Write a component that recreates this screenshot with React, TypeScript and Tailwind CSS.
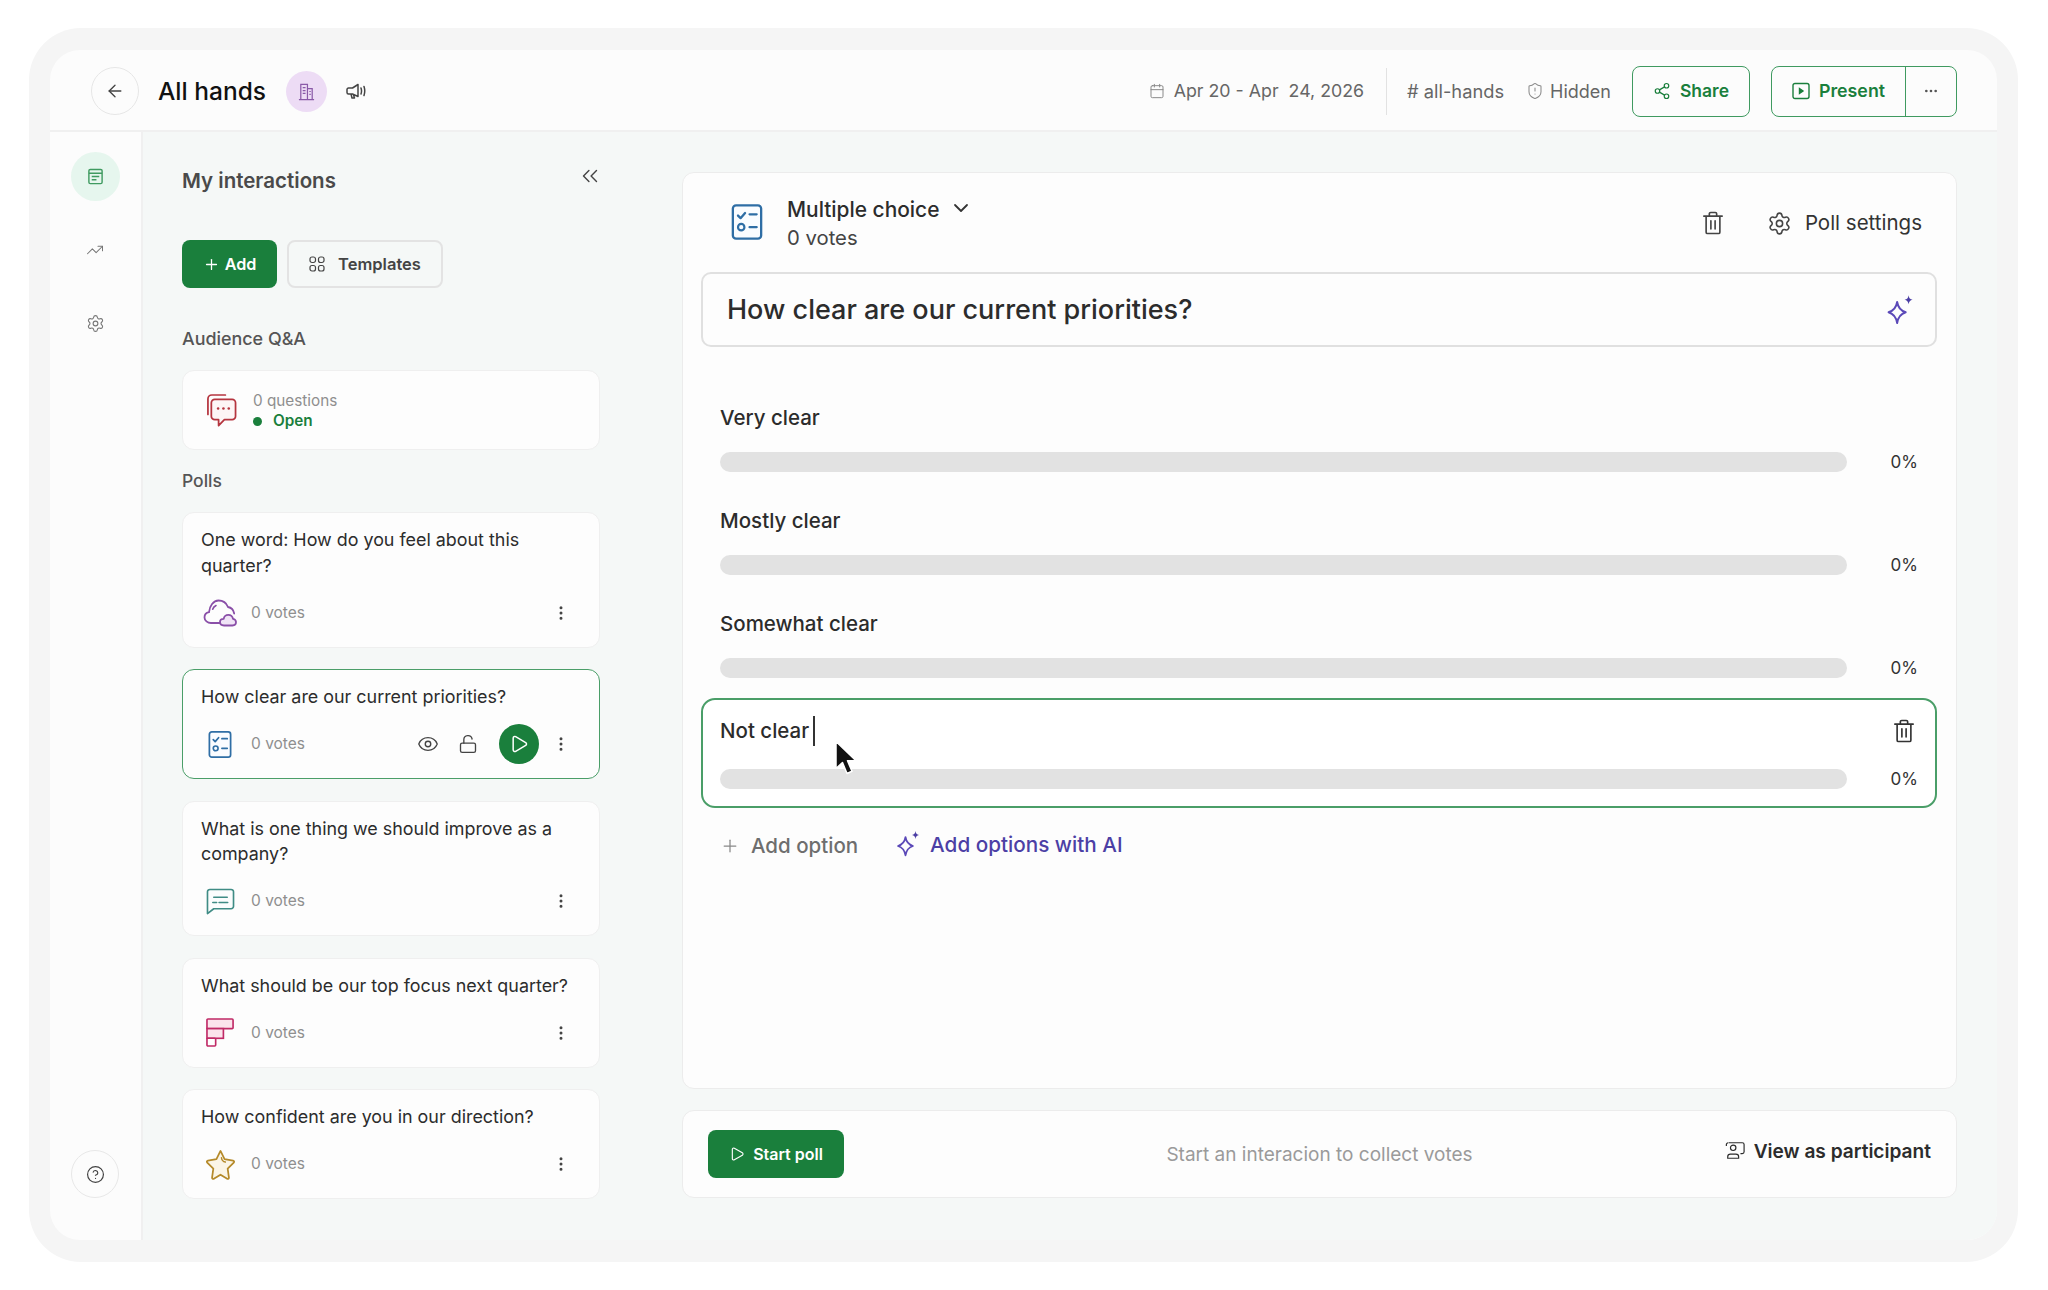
import React from "react";
import { ArrowLeft, ChevronDown, ChevronsLeft, EllipsisVertical, Ellipsis, Eye, LockOpen, Play, Plus, Settings, Share2, TrendingUp, CircleHelp, Calendar, ShieldAlert } from "lucide-react";

const Trash = ({ className }: { className?: string }) => (
  <svg viewBox="0 0 24 26" fill="none" stroke="currentColor" strokeWidth="1.8" strokeLinecap="round" strokeLinejoin="round" className={className}>
    <path d="M2 5.500h20M8 5.500V3a1.500 1.500 0 0 1 1.500-1.500h5A1.500 1.500 0 0 1 16 3v2.500M4.500 5.500V23a1.500 1.500 0 0 0 1.500 1.500h12a1.500 1.500 0 0 0 1.500-1.500V5.500M9.700 10.500v9M14.300 10.500v9" />
  </svg>
);

const Sparkle = ({ className }: { className?: string }) => (
  <svg viewBox="0 0 28 28" fill="none" className={className}>
    <path d="M11.500 7c.8 5 3 7.600 7.500 9-4.500 1.400-6.700 4-7.500 9.500-.8-5.500-3-8.100-7.500-9.500 4.500-1.400 6.700-4 7.500-9z" stroke="#5b49b8" strokeWidth="1.700" strokeLinejoin="round" />
    <path d="M21.500 1c.4 2.600 1.300 3.500 3.500 4-2.200.5-3.100 1.400-3.500 4-.4-2.600-1.300-3.500-3.500-4 2.200-.5 3.100-1.400 3.500-4z" fill="#4c3fa5" />
  </svg>
);

const Cloud = () => (
  <svg viewBox="0 0 34 28" fill="none" className="h-[28px] w-[34px]">
    <path d="M19 24H8c-3.500 0-6.500-2.500-6.500-5.500 0-2.800 2-4.800 4.500-5.300C6.500 7 10.500 1.500 15.500 1.500c4.500 0 8 2.800 9.500 6.500 3 .5 5.500 3 6.200 6.500" stroke="#8a4fa8" strokeWidth="1.800" strokeLinecap="round" />
    <path d="M13 6.500c-1.500.8-2.800 2-3.300 3.800" stroke="#8a4fa8" strokeWidth="1.600" strokeLinecap="round" />
    <path d="M21 26.500h8.500c2 0 3.500-1.500 3.500-3.400 0-2-1.500-3-3-3.300-.5-2.500-2.500-4-4.700-4-2.300 0-4.300 1.800-4.600 4-2.200 0-3.700 1.400-3.700 3.300 0 2 1.500 3.400 4 3.400z" fill="#f0e4f6" stroke="#8a4fa8" strokeWidth="1.800" strokeLinejoin="round" />
  </svg>
);

const Checklist = ({ className }: { className?: string }) => (
  <svg viewBox="0 0 24 28" fill="none" className={className}>
    <rect x="1" y="1" width="22" height="26" rx="2.500" fill="#fafcff" stroke="#2f6ea5" strokeWidth="1.800" />
    <path d="M5 9l2 2 3.500-4M14 8h5.500M14 18h5.500" stroke="#2f6ea5" strokeWidth="1.800" strokeLinecap="round" strokeLinejoin="round" />
    <circle cx="7.500" cy="18" r="2.500" stroke="#2f6ea5" strokeWidth="1.700" />
  </svg>
);

const ChatTeal = () => (
  <svg viewBox="0 0 30 28" fill="none" className="h-[27px] w-[29px]">
    <path d="M4 1.500h22a2.500 2.500 0 0 1 2.500 2.500v15a2.500 2.500 0 0 1-2.500 2.500H8l-6.500 5V4A2.500 2.500 0 0 1 4 1.500z" fill="#fbfdfd" stroke="#3f8c85" strokeWidth="1.700" strokeLinejoin="round" />
    <path d="M8 9.500h14M7 15h4M13.500 15h9" stroke="#3f8c85" strokeWidth="1.600" strokeLinecap="round" />
  </svg>
);

const Stairs = () => (
  <svg viewBox="0 0 30 30" fill="none" className="h-[29px] w-[29px]">
    <rect x="1" y="1" width="27" height="10" rx="1" fill="#fbe4ec" stroke="#c02a66" strokeWidth="1.700" />
    <rect x="1" y="11" width="17" height="10" fill="#fbe4ec" stroke="#c02a66" strokeWidth="1.700" />
    <rect x="1" y="21" width="9" height="8" rx="1" fill="#fff" stroke="#c02a66" strokeWidth="1.700" />
  </svg>
);

const Star = () => (
  <svg viewBox="0 0 32 32" fill="none" className="h-[31px] w-[31px]">
    <path d="M16 2l4.200 8.400 8.800 1.600c1 .2 1.400 1.300.7 2l-6.300 6.300 1.300 9.200c.1 1-.9 1.700-1.800 1.300L16 26.500 9.100 30.800c-.9.4-1.900-.3-1.800-1.300l1.300-9.200-6.300-6.300c-.7-.7-.3-1.800.7-2l8.800-1.600z" fill="#fbf5e6" stroke="#b58a2a" strokeWidth="1.800" strokeLinejoin="round" />
    <path d="M17 9c.3 2.500 1.500 4 4 4.500" stroke="#b58a2a" strokeWidth="1.500" strokeLinecap="round" />
  </svg>
);

const ChatRed = () => (
  <svg viewBox="0 0 32 36" fill="none" className="h-[35px] w-[31px]">
    <path d="M20 2H6a4 4 0 0 0-4 4v16" stroke="#b5353f" strokeWidth="1.800" strokeLinecap="round" />
    <path d="M9 6.500h18a3.500 3.500 0 0 1 3.500 3.500v14a3.500 3.500 0 0 1-3.500 3.500h-8l-6 6v-6H9A3.500 3.500 0 0 1 5.500 24V10A3.500 3.500 0 0 1 9 6.500z" fill="#fdf5f5" stroke="#b5353f" strokeWidth="1.800" strokeLinejoin="round" />
    <circle cx="12.500" cy="16" r="1.300" fill="#b5353f" />
    <circle cx="18" cy="16" r="1.300" fill="#b5353f" />
    <circle cx="23.500" cy="16" r="1.300" fill="#b5353f" />
  </svg>
);

const Poll = ({ text, icon, selected }: { text: string; icon: React.ReactNode; selected?: boolean }) => (
  <div className={`rounded-[12px] bg-[#fdfdfd] pb-[14px] pl-[18px] pr-[18px] pt-[14px] ${selected ? "border-[1.500px] border-[#4a9e68]" : "border border-[#efefef]"}`}>
    <p className="text-[17.900px] leading-[25.500px] text-[#2c2c2c]">{text}</p>
    <div className="mt-[14.500px] flex h-[40px] items-center pr-[14px]">
      <div className="flex w-[38px] justify-center">{icon}</div>
      <span className="ml-[12px] text-[15.500px] text-[#8f8f8f]">0 votes</span>
      <div className="ml-auto flex items-center">
        {selected && (
          <>
            <Eye className="h-[22px] w-[22px] text-[#444]" strokeWidth={1.500} />
            <LockOpen className="ml-[19px] h-[20px] w-[20px] text-[#444]" strokeWidth={1.600} />
            <div className="ml-[21px] mr-[16px] flex h-[40px] w-[40px] items-center justify-center rounded-full bg-[#1a7f3c]">
              <Play className="h-[20px] w-[20px] text-white" strokeWidth={1.800} />
            </div>
          </>
        )}
        <EllipsisVertical className="-mx-[3px] h-[18px] w-[18px] text-[#444]" strokeWidth={2} />
      </div>
    </div>
  </div>
);

const Option = ({ label }: { label: string }) => (
  <div className="px-[19px]">
    <div className="text-[20.500px] font-medium leading-[28px] text-[#2c2c2c]">{label}</div>
    <div className="mt-[20px] flex items-center">
      <div className="h-[20px] w-[1127px] rounded-full bg-[#e2e2e2]" />
      <span className="ml-auto text-[17px] leading-[20px] text-[#333]">0%</span>
    </div>
  </div>
);

export default function App() {
  return (
    <div className="h-[1290px] w-[2048px] overflow-hidden bg-white pl-[29px] pt-[28px] font-[Inter,sans-serif]">
      <div className="h-[1234px] w-[1989px] rounded-[52px] bg-[#f5f5f5] p-[21px] pt-[22px]">
        <div className="flex h-[1190px] flex-col overflow-hidden rounded-[30px] bg-[#fcfcfc]">
          <header className="flex h-[82px] shrink-0 items-center border-b-2 border-[#f0f0f0] pl-[41px] pr-[40px] pt-[2px]">
            <div className="flex h-[48px] w-[48px] items-center justify-center rounded-full border border-[#e6e6e6]">
              <ArrowLeft className="h-[20px] w-[20px] text-[#444]" strokeWidth={1.600} />
            </div>
            <span className="ml-[19px] text-[24.500px] font-medium leading-[30px] text-[#111]">All hands</span>
            <div className="ml-[20px] flex h-[41px] w-[41px] items-center justify-center rounded-full bg-[#eddcf5]">
              <svg viewBox="0 0 20 20" fill="none" stroke="#8a5aa8" strokeWidth="1.300" className="h-[19px] w-[19px]">
                <path d="M2 18.500h16M4 18.500V2.500h7v16M11 7h5v11.500M6 6h3M6 9h3M6 12h3M13 10h1.500M13 13h1.500" />
              </svg>
            </div>
            <svg viewBox="0 0 20 18" fill="none" stroke="#444" strokeWidth="1.500" strokeLinejoin="round" strokeLinecap="round" className="ml-[19px] h-[18px] w-[20px]">
              <path d="M12 2.500v12L6.500 12H2.500a1.500 1.500 0 0 1-1.500-1.500v-3A1.500 1.500 0 0 1 2.500 6h4zM5 12l1 4h2.500l-1-3.200M15 6c.7 2 .7 4 0 6M18 4.500c1 3 1 6 0 9" />
            </svg>
            <div className="ml-auto flex items-center">
              <Calendar className="h-[16px] w-[16px] text-[#8a8a8a]" strokeWidth={1.500} />
              <span className="ml-[9px] whitespace-pre text-[17.800px] text-[#666]">Apr 20 - Apr  24, 2026</span>
              <div className="ml-[22px] h-[47px] w-px bg-[#e2e2e2]" />
              <span className="ml-[20px] pt-[1px] text-[18.300px] text-[#666]"># all-hands</span>
              <ShieldAlert className="ml-[22px] h-[18px] w-[18px] text-[#8a8a8a]" strokeWidth={1.400} />
              <span className="ml-[6px] text-[18px] text-[#666]">Hidden</span>
              <div className="ml-[21px] flex h-[51px] w-[118px] items-center justify-center gap-[9px] rounded-[8px] border-[1.500px] border-[#3f9a60] text-[#1a7f3c]">
                <Share2 className="h-[18px] w-[18px]" strokeWidth={1.600} />
                <span className="text-[17.500px] font-semibold">Share</span>
              </div>
              <div className="ml-[21px] flex h-[51px] w-[186px] items-center rounded-[8px] border-[1.500px] border-[#3f9a60] text-[#1a7f3c]">
                <div className="flex h-full w-[134px] items-center justify-center gap-[9px] border-r-[1.500px] border-[#3f9a60]">
                  <svg viewBox="0 0 18 18" fill="none" stroke="currentColor" strokeWidth="1.400" className="h-[18px] w-[18px]">
                    <rect x="1" y="1.500" width="16" height="15" rx="2" />
                    <path d="M7.500 6.500l3.500 2.500-3.500 2.500z" fill="currentColor" />
                  </svg>
                  <span className="text-[17.800px] font-semibold">Present</span>
                </div>
                <div className="flex flex-1 justify-center">
                  <Ellipsis className="h-[16px] w-[16px] text-[#555]" strokeWidth={2} />
                </div>
              </div>
            </div>
          </header>

          <div className="flex min-h-0 flex-1">
            <aside className="flex w-[93px] shrink-0 flex-col items-center border-r-2 border-[#f0f0f0] pb-[42px] pr-[1px] pt-[20px]">
              <div className="flex h-[49px] w-[49px] items-center justify-center rounded-full bg-[#e6f6ee]">
                <svg viewBox="0 0 18 18" fill="none" stroke="#3f9a60" strokeWidth="1.500" className="h-[17px] w-[17px]">
                  <rect x="2" y="1.500" width="14" height="15" rx="1.500" />
                  <path d="M2 5.500h14M5 9h8M5 12.500h5" />
                </svg>
              </div>
              <TrendingUp className="mt-[40px] h-[18px] w-[18px] text-[#777]" strokeWidth={1.400} />
              <Settings className="mt-[55px] h-[19px] w-[19px] text-[#777]" strokeWidth={1.400} />
              <div className="mt-auto flex h-[48px] w-[48px] items-center justify-center rounded-full border border-[#e8e8e8]">
                <CircleHelp className="h-[19px] w-[19px] text-[#444]" strokeWidth={1.500} />
              </div>
            </aside>

            <div className="flex min-w-0 flex-1 bg-[#f5f8f7]">
              <section className="w-[539px] shrink-0 pl-[39px] pr-[82px] pt-[34px]">
                <div className="flex items-start justify-between">
                  <h2 className="text-[20.500px] font-semibold leading-[30px] text-[#4a4a4a]">My interactions</h2>
                  <ChevronsLeft className="-mr-[3px] -mt-[3px] h-[26px] w-[26px] text-[#444]" strokeWidth={1.300} />
                </div>
                <div className="mt-[44px] flex gap-[10px]">
                  <div className="flex h-[48px] w-[95px] items-center justify-center gap-[5px] rounded-[8px] bg-[#1a7f3c] text-white">
                    <Plus className="h-[17px] w-[17px]" strokeWidth={1.800} />
                    <span className="text-[16.200px] font-semibold">Add</span>
                  </div>
                  <div className="flex h-[48px] w-[156px] items-center justify-center gap-[13px] rounded-[8px] border-2 border-[#e3e3e3] text-[#444]">
                    <svg viewBox="0 0 16 16" fill="none" stroke="currentColor" strokeWidth="1.200" className="h-[16px] w-[16px]">
                      <rect x="1" y="1" width="5.500" height="5.500" rx="2" />
                      <rect x="9.500" y="1" width="5.500" height="5.500" rx="2" />
                      <rect x="1" y="9.500" width="5.500" height="5.500" rx="2" />
                      <rect x="9.500" y="9.500" width="5.500" height="5.500" rx="2" />
                    </svg>
                    <span className="text-[16.500px] font-semibold">Templates</span>
                  </div>
                </div>
                <h3 className="mt-[39px] text-[17.900px] font-medium leading-[24px] text-[#555]">Audience Q&amp;A</h3>
                <div className="mt-[19px] flex h-[80px] items-center rounded-[12px] border border-[#efefef] bg-[#fdfdfd] pl-[23px]">
                  <ChatRed />
                  <div className="ml-[16px] pt-[2px]">
                    <div className="text-[15.300px] leading-[20px] text-[#8f8f8f]">0 questions</div>
                    <div className="flex items-center text-[15.300px] font-semibold leading-[20px] text-[#1a7f3c]">
                      <span className="h-[9px] w-[9px] rounded-full bg-[#1a7f3c]" />
                      <span className="ml-[11px]">Open</span>
                    </div>
                  </div>
                </div>
                <h3 className="mt-[19px] text-[17.500px] font-medium leading-[24px] text-[#555]">Polls</h3>
                <div className="mt-[19px] flex flex-col gap-[21.500px]">
                  <Poll text="One word: How do you feel about this quarter?" icon={<Cloud />} />
                  <Poll text="How clear are our current priorities?" icon={<Checklist className="h-[27px] w-[24px]" />} selected />
                  <Poll text="What is one thing we should improve as a company?" icon={<ChatTeal />} />
                  <Poll text="What should be our top focus next quarter?" icon={<Stairs />} />
                  <Poll text="How confident are you in our direction?" icon={<Star />} />
                </div>
              </section>

              <section className="flex min-w-0 flex-1 flex-col gap-[21px] pb-[42px] pr-[40px] pt-[40px]">
                <div className="flex-1 rounded-[12px] border border-[#ececec] bg-[#fdfdfd] pl-[18px] pr-[19px]">
                  <div className="flex h-[99px] items-center pt-[1px]">
                    <Checklist className="-mt-[3px] ml-[30px] h-[36px] w-[32px]" />
                    <div className="ml-[24px] pt-[1px]">
                      <div className="flex items-center text-[20.900px] font-medium leading-[28px] text-[#2c2c2c]">
                        Multiple choice
                        <ChevronDown className="-mt-[4px] ml-[10px] h-[24px] w-[24px] text-[#333]" strokeWidth={1.800} />
                      </div>
                      <div className="text-[20.300px] leading-[28px] text-[#444]">0 votes</div>
                    </div>
                    <Trash className="ml-auto h-[26px] w-[22px] text-[#444]" />
                    <Settings className="ml-[43px] h-[25px] w-[25px] text-[#444]" strokeWidth={1.500} />
                    <span className="ml-[13px] mr-[15px] text-[20.500px] text-[#333]">Poll settings</span>
                  </div>
                  <div className="flex h-[75px] items-center justify-between rounded-[10px] border-2 border-[#e0e0e0] pl-[24px] pr-[19px] pt-[1px]">
                    <span className="text-[27px] font-medium text-[#2c2c2c]">How clear are our current priorities?</span>
                    <Sparkle className="h-[32px] w-[32px]" />
                  </div>
                  <div className="mt-[57px] flex flex-col gap-[35px]">
                    <Option label="Very clear" />
                    <Option label="Mostly clear" />
                    <Option label="Somewhat clear" />
                  </div>
                  <div className="relative mt-[20px] h-[110px] rounded-[14px] border-2 border-[#4a9e68] bg-white pl-[17px] pr-[17px] pt-[16px]">
                    <div className="flex items-center justify-between">
                      <div className="flex items-center text-[20.500px] font-medium leading-[28px] text-[#2c2c2c]">
                        Not clear
                        <span className="ml-[4px] h-[30px] w-[2px] bg-[#333]" />
                      </div>
                      <Trash className="mr-[3px] h-[26px] w-[22px] text-[#333]" />
                    </div>
                    <div className="mt-[23px] flex items-center">
                      <div className="h-[20px] w-[1127px] rounded-full bg-[#e2e2e2]" />
                      <span className="ml-auto text-[17px] leading-[20px] text-[#333]">0%</span>
                    </div>
                    <svg viewBox="0 0 22 36" className="absolute left-[131px] top-[39px] h-[37px] w-[22px]">
                      <path d="M2 2v27l6.500-6 4.500 11 5-2.200-4.500-10.500H22z" fill="#111" stroke="#fff" strokeWidth="1.500" strokeLinejoin="round" />
                    </svg>
                  </div>
                  <div className="mt-[24px] flex items-center pl-[19px]">
                    <Plus className="h-[20px] w-[20px] text-[#888]" strokeWidth={1.500} />
                    <span className="ml-[11px] text-[20.500px] font-medium leading-[28px] text-[#6e6e6e]">Add option</span>
                    <Sparkle className="-mt-[4px] ml-[36px] h-[28px] w-[28px]" />
                    <span className="-mt-[2px] ml-[8px] text-[20.700px] font-medium leading-[28px] text-[#4c3fa5]">Add options with AI</span>
                  </div>
                </div>
                <div className="grid h-[88px] shrink-0 grid-cols-3 items-center rounded-[12px] border border-[#ececec] bg-[#fdfdfd] pl-[25px] pr-[25px]">
                  <div className="flex h-[48px] w-[136px] items-center justify-center gap-[8px] justify-self-start rounded-[8px] bg-[#1a7f3c] text-white">
                    <Play className="h-[16px] w-[16px]" strokeWidth={1.700} />
                    <span className="text-[16px] font-semibold">Start poll</span>
                  </div>
                  <span className="justify-self-center whitespace-nowrap pt-[3px] text-[19px] text-[#9a9a9a]">Start an interacion to collect votes</span>
                  <div className="-mt-[6px] flex items-center gap-[9px] justify-self-end whitespace-nowrap text-[#2c2c2c]">
                    <svg viewBox="0 0 22 20" fill="none" stroke="currentColor" strokeWidth="1.300" className="h-[19px] w-[20px]">
                      <path d="M4 1.500h15a2 2 0 0 1 2 2v8a2 2 0 0 1-2 2h-2M1.500 5V3.500a2 2 0 0 1 2-2" />
                      <circle cx="9" cy="7" r="3" />
                      <path d="M3 18.500v-1.500a3 3 0 0 1 3-3h6a3 3 0 0 1 3 3v1.500z" />
                    </svg>
                    <span className="text-[19.100px] font-semibold">View as participant</span>
                  </div>
                </div>
              </section>
            </div>
          </div>
        </div>
      </div>
    </div>
  );
}
